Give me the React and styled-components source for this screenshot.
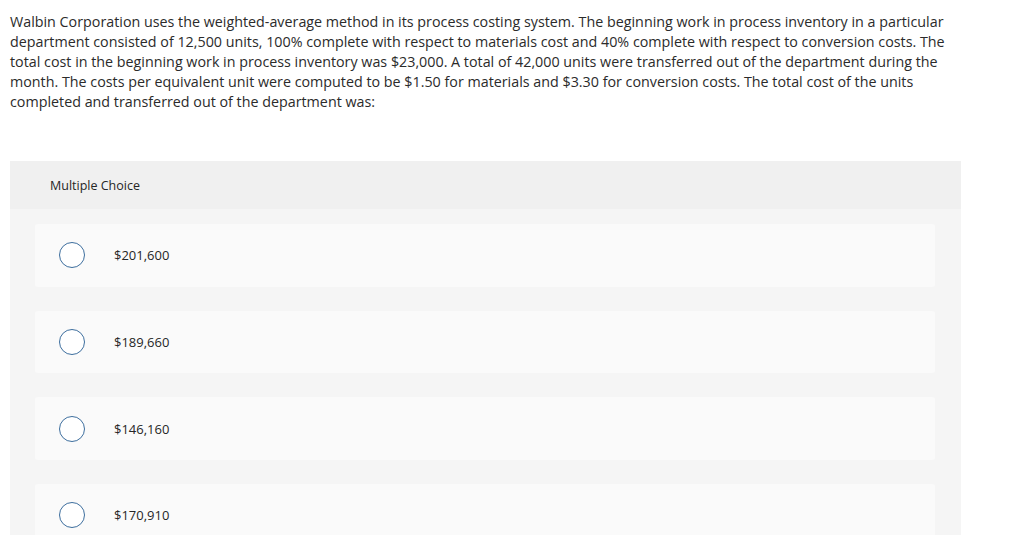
import React from "react";
import styled, { createGlobalStyle } from "styled-components";

const Global = createGlobalStyle`
  html, body { margin: 0; padding: 0; background: #fff; }
  body { font-family: "Open Sans", "Lato", sans-serif; color: #262626; }
`;

const Page = styled.div`
  width: 1024px;
  height: 549px;
  overflow: hidden;
  padding: 12px 0 0 10px;
  box-sizing: border-box;
`;

const Question = styled.p`
  margin: 0;
  width: 1000px;
  font-size: 14.3px;
  line-height: 20px;
  color: #2b2b2b;
  white-space: nowrap;
`;

const Panel = styled.section`
  margin-top: 49px;
  width: 951px;
  height: 374px;
  overflow: hidden;
  background: #f5f5f5;
`;

const Header = styled.div`
  height: 48px;
  background: #f0f0f0;
  display: flex;
  align-items: center;
  padding-left: 40px;
  font-size: 12.5px;
  color: #262626;
`;

const List = styled.div`
  display: flex;
  flex-direction: column;
  gap: 24px;
  padding: 15px 26px 0 25px;
`;

const Card = styled.label`
  height: 62.67px;
  background: #fafafa;
  border-radius: 3px;
  display: flex;
  align-items: center;
  padding-left: 24px;
`;

const Radio = styled.span`
  width: 26px;
  height: 26px;
  box-sizing: border-box;
  border-radius: 50%;
  border: 1.5px solid #3d6e9e;
  background: #fff;
  flex: none;
`;

const Value = styled.span`
  margin-left: 29px;
  font-size: 13px;
  color: #262626;
`;

const lines = [
  "Walbin Corporation uses the weighted-average method in its process costing system. The beginning work in process inventory in a particular",
  "department consisted of 12,500 units, 100% complete with respect to materials cost and 40% complete with respect to conversion costs. The",
  "total cost in the beginning work in process inventory was $23,000. A total of 42,000 units were transferred out of the department during the",
  "month. The costs per equivalent unit were computed to be $1.50 for materials and $3.30 for conversion costs. The total cost of the units",
  "completed and transferred out of the department was:",
];

const options = ["$201,600", "$189,660", "$146,160", "$170,910"];

export default function App() {
  return (
    <>
      <Global />
      <Page>
        <Question>
          {lines.map((l, i) => (
            <React.Fragment key={i}>
              {l}
              {i < lines.length - 1 && <br />}
            </React.Fragment>
          ))}
        </Question>
        <Panel>
          <Header>Multiple Choice</Header>
          <List>
            {options.map((o) => (
              <Card key={o}>
                <Radio />
                <Value>{o}</Value>
              </Card>
            ))}
          </List>
        </Panel>
      </Page>
    </>
  );
}
